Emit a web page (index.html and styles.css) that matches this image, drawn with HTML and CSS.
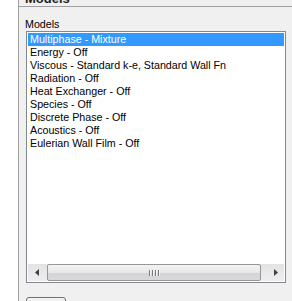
FILE: index.html
```html
<!DOCTYPE html>
<html lang="en">
<head>
    <meta charset="UTF-8">
    <title>Models</title>
    <link rel="stylesheet" href="styles.css">
</head>
<body>
    <div class="page">
        <div class="side"></div>
        <div class="panel">
            <div class="heading">Models</div>
            <div class="group">
                <div class="label">Models</div>
                <div class="listbox">
                    <ul class="items">
                        <li class="selected">Multiphase - Mixture</li>
                        <li>Energy - Off</li>
                        <li>Viscous - Standard k-e, Standard Wall Fn</li>
                        <li>Radiation - Off</li>
                        <li>Heat Exchanger - Off</li>
                        <li>Species - Off</li>
                        <li>Discrete Phase - Off</li>
                        <li>Acoustics - Off</li>
                        <li>Eulerian Wall Film - Off</li>
                    </ul>
                    <div class="hscroll">
                        <div class="arrow">
                            <svg width="4" height="7" viewBox="0 0 4 7"><path d="M4 0 L0 3.5 L4 7 Z" fill="#404040"/></svg>
                        </div>
                        <div class="track">
                            <div class="thumb"><span class="grip"></span><span class="grip"></span><span class="grip"></span><span class="grip"></span></div>
                        </div>
                        <div class="arrow">
                            <svg width="4" height="7" viewBox="0 0 4 7"><path d="M0 0 L4 3.5 L0 7 Z" fill="#404040"/></svg>
                        </div>
                    </div>
                </div>
                <button class="btn" type="button"></button>
            </div>
        </div>
    </div>
</body>
</html>
```

FILE: styles.css
```css
/* Models panel */
body {
    margin: 0;
    font-family: "Liberation Sans", Arial, sans-serif;
    font-size: 10.7px;
    background-color: #f0f0f0;
    overflow: hidden;
}

.page {
    display: flex;
    height: 301px;
}

.side {
    width: 18px;
    background-color: #fff;
    flex: none;
}

.panel {
    flex: 1;
    border-left: 1px solid #a0a0a0;
    overflow: hidden;
}

.heading {
    font-weight: bold;
    font-size: 13px;
    line-height: 15px;
    margin-top: -9px;
    padding-left: 6px;
    height: 15px;
    color: #1e1e1e;
}

.group {
    border-top: 1px solid #a0a0a0;
    padding: 10px 6px 0 6px;
}

.label {
    height: 14px;
    line-height: 14px;
    color: #000;
}

.listbox {
    margin-left: 1px;
    height: 248px;
    border: 1px solid #828790;
    padding: 1px;
    background-color: #fff;
    display: flex;
    flex-direction: column;
}

.items {
    list-style: none;
    margin: 0;
    padding: 0;
    flex: 1;
}

.items li {
    height: 13px;
    line-height: 13px;
    padding-left: 2px;
    color: #000;
    white-space: nowrap;
}

.items li.selected {
    background-color: #3399ff;
    color: #fff;
}

.hscroll {
    height: 17px;
    display: flex;
    background: linear-gradient(#e3e3e3, #eeeeee);
}

.arrow {
    width: 17px;
    display: flex;
    align-items: center;
    justify-content: center;
    flex: none;
}

.track {
    flex: 1;
    display: flex;
    padding: 0 1px;
}

.thumb {
    flex: 1;
    margin: 0 5px 0 1px;
    border: 1px solid #979797;
    border-radius: 2px;
    background: linear-gradient(#f3f3f3, #e8e8e8 50%, #d4d4d4 51%, #d8d8d8);
    display: flex;
    align-items: center;
    justify-content: center;
    gap: 1px;
}

.grip {
    width: 1px;
    height: 6px;
    background-color: #7a7a7a;
    border-right: 1px solid #f4f4f4;
}

.btn {
    margin: 14px 0 0 1px;
    width: 40px;
    height: 22px;
    border: 1px solid #707070;
    border-radius: 3px;
    background: linear-gradient(#f2f2f2, #dddddd);
    display: block;
}
```
